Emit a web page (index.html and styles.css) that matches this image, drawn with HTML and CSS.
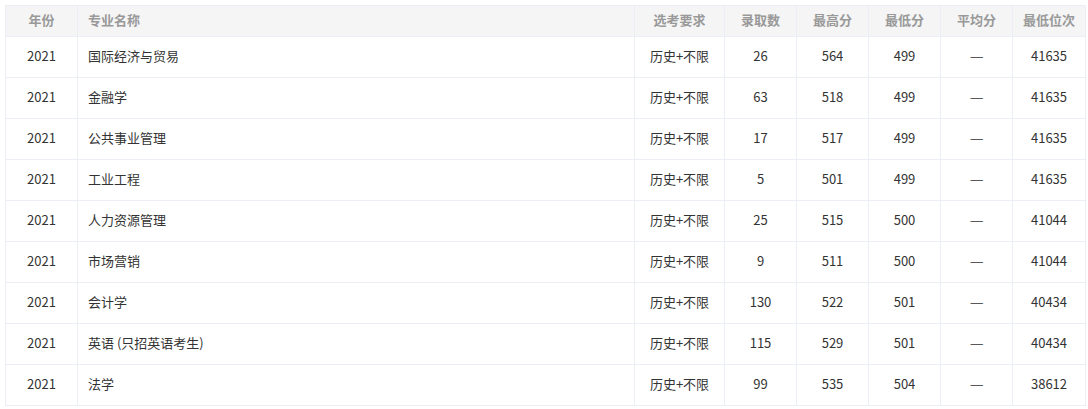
FILE: index.html
```html
<!DOCTYPE html>
<html lang="zh">
<head>
<meta charset="utf-8">
<link rel="stylesheet" href="styles.css">
</head>
<body>
<table class="score-table">
  <colgroup>
    <col class="c-year"><col class="c-major"><col class="c-req"><col class="c-num">
    <col class="c-num"><col class="c-num"><col class="c-num"><col class="c-rank">
  </colgroup>
  <thead>
    <tr>
      <th>年份</th><th class="left">专业名称</th><th>选考要求</th><th>录取数</th>
      <th>最高分</th><th>最低分</th><th>平均分</th><th>最低位次</th>
    </tr>
  </thead>
  <tbody>
    <tr><td>2021</td><td class="left">国际经济与贸易</td><td>历史+不限</td><td>26</td><td>564</td><td>499</td><td><span class="dash">—</span></td><td>41635</td></tr>
    <tr><td>2021</td><td class="left">金融学</td><td>历史+不限</td><td>63</td><td>518</td><td>499</td><td><span class="dash">—</span></td><td>41635</td></tr>
    <tr><td>2021</td><td class="left">公共事业管理</td><td>历史+不限</td><td>17</td><td>517</td><td>499</td><td><span class="dash">—</span></td><td>41635</td></tr>
    <tr><td>2021</td><td class="left">工业工程</td><td>历史+不限</td><td>5</td><td>501</td><td>499</td><td><span class="dash">—</span></td><td>41635</td></tr>
    <tr><td>2021</td><td class="left">人力资源管理</td><td>历史+不限</td><td>25</td><td>515</td><td>500</td><td><span class="dash">—</span></td><td>41044</td></tr>
    <tr><td>2021</td><td class="left">市场营销</td><td>历史+不限</td><td>9</td><td>511</td><td>500</td><td><span class="dash">—</span></td><td>41044</td></tr>
    <tr><td>2021</td><td class="left">会计学</td><td>历史+不限</td><td>130</td><td>522</td><td>501</td><td><span class="dash">—</span></td><td>40434</td></tr>
    <tr><td>2021</td><td class="left">英语 (只招英语考生)</td><td>历史+不限</td><td>115</td><td>529</td><td>501</td><td><span class="dash">—</span></td><td>40434</td></tr>
    <tr><td>2021</td><td class="left">法学</td><td>历史+不限</td><td>99</td><td>535</td><td>504</td><td><span class="dash">—</span></td><td>38612</td></tr>
  </tbody>
</table>
</body>
</html>
```

FILE: styles.css
```css
html, body {
  margin: 0;
  padding: 0;
  background: #fff;
}
body {
  padding: 5px 0 0 5px;
  font-family: "Noto Sans CJK SC", "Microsoft YaHei", sans-serif;
  font-size: 13px;
  color: #333;
}
.score-table {
  border-collapse: collapse;
  table-layout: fixed;
  width: 1080px;
}
.c-year { width: 72px; }
.c-major { width: 557px; }
.c-req { width: 90px; }
.c-num { width: 72px; }
.c-rank { width: 73px; }
.score-table th,
.score-table td {
  border: 1px solid #ebeef5;
  text-align: center;
  padding: 0 10px 2px;
  line-height: 18px;
  white-space: nowrap;
}
.score-table th {
  height: 28px;
  background: #f5f5f5;
  color: #999;
  font-weight: bold;
}
.score-table td {
  height: 38px;
  color: #333;
}
.score-table .left {
  text-align: left;
}
.dash {
  display: inline-block;
  transform: scaleX(1.2);
}
```
